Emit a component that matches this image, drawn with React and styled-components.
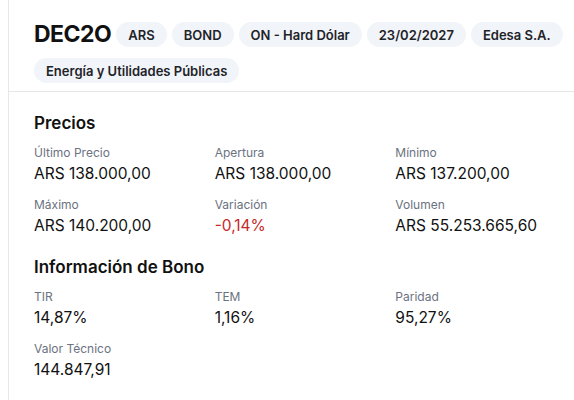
import React from "react";
import styled, { createGlobalStyle } from "styled-components";

const chips = ["ARS", "BOND", "ON - Hard Dólar", "23/02/2027", "Edesa S.A.", "Energía y Utilidades Públicas"];

const precios = [
  { label: "Último Precio", value: "ARS 138.000,00" },
  { label: "Apertura", value: "ARS 138.000,00" },
  { label: "Mínimo", value: "ARS 137.200,00" },
  { label: "Máximo", value: "ARS 140.200,00" },
  { label: "Variación", value: "-0,14%", negative: true },
  { label: "Volumen", value: "ARS 55.253.665,60" },
];

const bono = [
  { label: "TIR", value: "14,87%" },
  { label: "TEM", value: "1,16%" },
  { label: "Paridad", value: "95,27%" },
  { label: "Valor Técnico", value: "144.847,91" },
];

const App = () => {
  return (
    <Card>
      <GlobalStyle />
      <Header>
        <Ticker>DEC2O</Ticker>
        {chips.map(c => (
          <Chip key={c}>{c}</Chip>
        ))}
      </Header>
      <Body>
        <Section>
          <SectionTitle>Precios</SectionTitle>
          <Grid>
            {precios.map(p => (
              <Stat key={p.label}>
                <Label>{p.label}</Label>
                <Value $negative={p.negative}>{p.value}</Value>
              </Stat>
            ))}
          </Grid>
        </Section>
        <Section>
          <SectionTitle>Información de Bono</SectionTitle>
          <Grid>
            {bono.map(p => (
              <Stat key={p.label}>
                <Label>{p.label}</Label>
                <Value>{p.value}</Value>
              </Stat>
            ))}
          </Grid>
        </Section>
      </Body>
    </Card>
  );
};

export default App;

//------------------- Styles ------------------------//

const GlobalStyle = createGlobalStyle`
  *, *:before, *:after {
    box-sizing: border-box;
  }
  body {
    margin: 0;
    background: #ffffff;
    font-family: "Inter", "Liberation Sans", sans-serif;
    color: #111111;
  }
`;

const Card = styled.div`
  margin-left: 8px;
  border-left: 1px solid #e5e7eb;
  min-height: 400px;
  background: #ffffff;
`;

const Header = styled.div`
  display: flex;
  flex-wrap: wrap;
  align-items: center;
  gap: 11px 5px;
  padding: 22px 2px 8px 25px;
  border-bottom: 1px solid #e5e7eb;
`;

const Ticker = styled.h1`
  margin: 0;
  font-size: 23px;
  font-weight: 700;
  letter-spacing: -0.5px;
  line-height: 25px;
`;

const Chip = styled.span`
  display: inline-flex;
  align-items: center;
  height: 25px;
  padding: 0 12px;
  border-radius: 999px;
  background: #f1f4f8;
  font-size: 13px;
  font-weight: 600;
  color: #1f2328;
`;

const Body = styled.div`
  padding: 19px 14px 0 25px;
  display: flex;
  flex-direction: column;
  gap: 18px;
`;

const Section = styled.section`
  display: flex;
  flex-direction: column;
  gap: 10px;
`;

const SectionTitle = styled.h2`
  margin: 0;
  font-size: 17px;
  font-weight: 600;
  line-height: 24px;
`;

const Grid = styled.div`
  display: grid;
  grid-template-columns: repeat(3, 1fr);
  gap: 12px 16px;
`;

const Stat = styled.div`
  display: flex;
  flex-direction: column;
  gap: 2px;
`;

const Label = styled.span`
  font-size: 12px;
  line-height: 16px;
  color: #6b7280;
`;

const Value = styled.span`
  font-size: 15.5px;
  line-height: 22px;
  color: ${p => (p.$negative ? "#c62828" : "#111111")};
`;
